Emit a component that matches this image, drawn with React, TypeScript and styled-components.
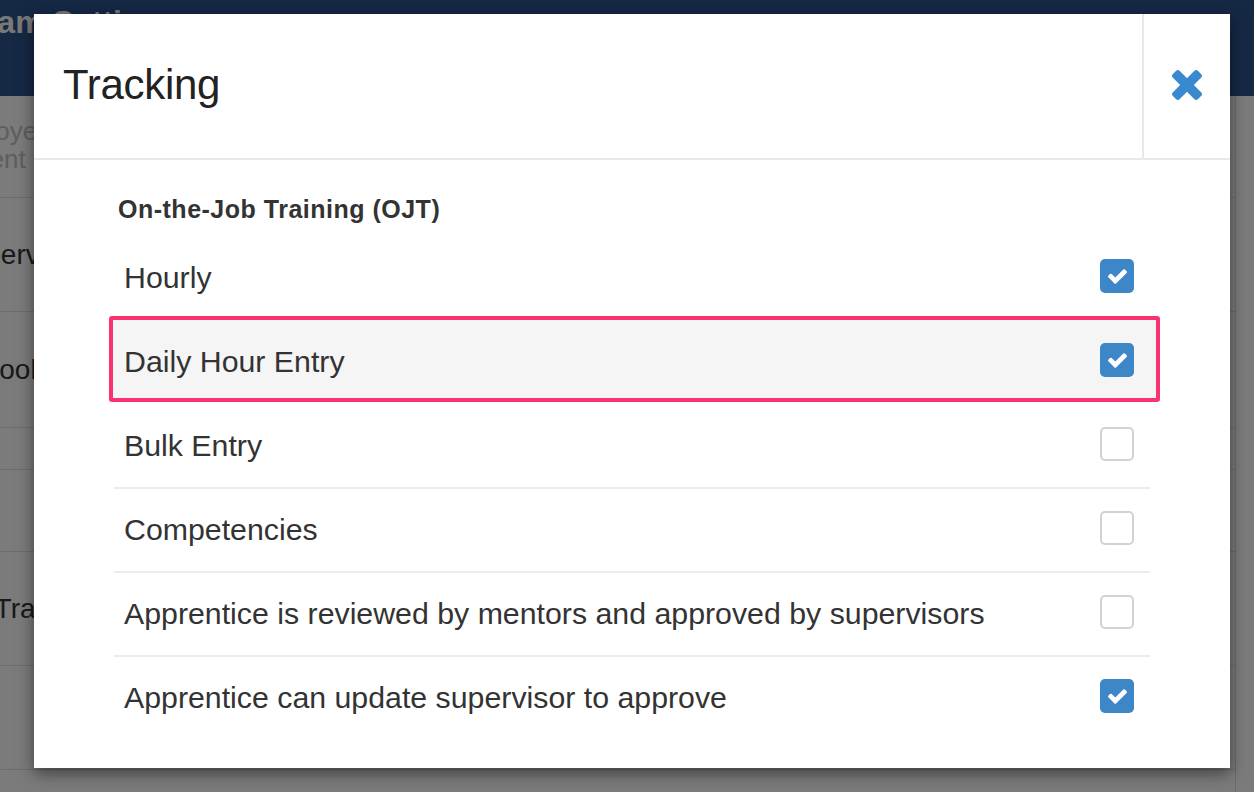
import React from "react";
import styled, { createGlobalStyle } from "styled-components";

const GlobalStyle = createGlobalStyle`
  html, body {
    margin: 0;
    padding: 0;
    width: 1254px;
    height: 792px;
    overflow: hidden;
    font-family: "Liberation Sans", Arial, Helvetica, sans-serif;
  }
  * { box-sizing: border-box; }
`;

const Screen = styled.div`
  position: relative;
  width: 1254px;
  height: 792px;
  overflow: hidden;
  background: #f6f6f6;
`;

/* ---------- page behind the modal ---------- */
const BgPage = styled.div`
  display: flex;
  flex-direction: column;
  width: 100%;
  height: 100%;
`;

const NavBar = styled.div`
  height: 96px;
  flex: none;
  background: #2a5088;
  padding-top: 6px;
  overflow: hidden;
`;

const NavTitle = styled.h1`
  margin: 0 0 0 -88px;
  font-size: 32px;
  line-height: 32px;
  font-weight: 700;
  color: #f2f2f2;
  white-space: nowrap;
`;

const BgTable = styled.div`
  display: flex;
  flex-direction: column;
  margin: 0 18px 0 -49px;
  border-right: 1px solid #d6d6d6;
  flex: 1;
`;

const BgRow = styled.div<{ $h: number }>`
  height: ${(p) => p.$h}px;
  flex: none;
  display: flex;
  align-items: center;
  border-bottom: 1px solid #dadada;
  font-size: 28px;
  color: #333;
  white-space: nowrap;
`;

const BgHead = styled.div`
  margin-left: -15px;
  font-size: 26px;
  line-height: 28px;
  color: #bdbdbd;
  padding-bottom: 4px;
`;

const Backdrop = styled.div`
  position: absolute;
  inset: 0;
  background: rgba(0, 0, 0, 0.5);
`;

/* ---------- modal ---------- */
const ModalLayer = styled.div`
  position: absolute;
  inset: 0;
  padding: 14px 24px 24px 34px;
  display: flex;
  align-items: flex-start;
`;

const Modal = styled.div`
  width: 1196px;
  height: 754px;
  background: #fff;
  box-shadow: 0 5px 15px rgba(0, 0, 0, 0.5);
  display: flex;
  flex-direction: column;
`;

const ModalHeader = styled.div`
  height: 146px;
  flex: none;
  display: flex;
  border-bottom: 2px solid #e9e9e9;
`;

const Title = styled.h2`
  flex: 1;
  margin: 0;
  padding: 0 0 3px 29px;
  display: flex;
  align-items: center;
  font-size: 42px;
  font-weight: 400;
  color: #222;
  letter-spacing: -0.3px;
`;

const CloseButton = styled.button`
  width: 88px;
  flex: none;
  border: none;
  border-left: 2px solid #e8e8e8;
  background: transparent;
  display: flex;
  align-items: center;
  justify-content: center;
  padding: 0 0 2px 0;
  color: #3a89cf;
  cursor: pointer;
`;

const ModalBody = styled.div`
  padding: 31px 80px 0 80px;
  display: flex;
  flex-direction: column;
`;

const SectionHeading = styled.h3`
  margin: 0 0 8px 4px;
  font-size: 25px;
  line-height: 36px;
  font-weight: 700;
  color: #333;
  letter-spacing: 0.5px;
`;

const OptionRow = styled.div<{ $divider?: boolean; $highlight?: boolean }>`
  position: relative;
  height: 84px;
  display: flex;
  align-items: center;
  justify-content: space-between;
  padding: 0 16px 0 10px;
  border-top: 2px solid ${(p) => (p.$divider ? "#ececec" : "transparent")};

  ${(p) =>
    p.$highlight &&
    `
    &::before {
      content: "";
      position: absolute;
      top: -5px;
      bottom: 1px;
      left: -5px;
      right: -10px;
      background: #f5f5f5;
      border: 4px solid #f8336f;
      border-radius: 3px;
    }
  `}
`;

const OptionLabel = styled.span`
  position: relative;
  font-size: 30.3px;
  color: #333;
  white-space: nowrap;
`;

const Checkbox = styled.span<{ $checked?: boolean }>`
  position: relative;
  width: 34px;
  height: 34px;
  margin-bottom: 4px;
  border-radius: 5px;
  display: flex;
  align-items: center;
  justify-content: center;
  background: ${(p) => (p.$checked ? "#3d87c9" : "#fff")};
  border: ${(p) => (p.$checked ? "none" : "2px solid #d2d2d2")};
  color: #fff;
`;

const CheckIcon = () => (
  <svg width="19" height="15" viewBox="121 334 1550 1188" fill="currentColor" aria-hidden="true">
    <path d="M1671 566q0 40-28 68l-724 724-136 136q-28 28-68 28t-68-28l-136-136-362-362q-28-28-28-68t28-68l136-136q28-28 68-28t68 28l294 295 656-657q28-28 68-28t68 28l136 136q28 28 28 68z" />
  </svg>
);

const TimesIcon = () => (
  <svg width="30" height="30" viewBox="110 366 1188 1188" fill="currentColor" aria-hidden="true">
    <path d="M1298 1322q0 40-28 68l-136 136q-28 28-68 28t-68-28l-294-294-294 294q-28 28-68 28t-68-28l-136-136q-28-28-28-68t28-68l294-294-294-294q-28-28-28-68t28-68l136-136q28-28 68-28t68 28l294 294 294-294q28-28 68-28t68 28l136 136q28 28 28 68t-28 68l-294 294 294 294q28 28 28 68z" />
  </svg>
);

const options = [
  { label: "Hourly", checked: true },
  { label: "Daily Hour Entry", checked: true, highlight: true },
  { label: "Bulk Entry", checked: false },
  { label: "Competencies", checked: false, divider: true },
  {
    label: "Apprentice is reviewed by mentors and approved by supervisors",
    checked: false,
    divider: true,
  },
  { label: "Apprentice can update supervisor to approve", checked: true, divider: true },
];

export default function App() {
  return (
    <>
      <GlobalStyle />
      <Screen>
        <BgPage>
          <NavBar>
            <NavTitle>Program Settings</NavTitle>
          </NavBar>
          <BgTable>
            <BgRow $h={102}>
              <BgHead>
                Employee
                <br />
                Student
              </BgHead>
            </BgRow>
            <BgRow $h={114}>Supervisor</BgRow>
            <BgRow $h={116}>School</BgRow>
            <BgRow $h={42} />
            <BgRow $h={82} />
            <BgRow $h={114}>RT Training</BgRow>
            <BgRow $h={104} />
          </BgTable>
        </BgPage>
        <Backdrop />
        <ModalLayer>
          <Modal role="dialog" aria-label="Tracking">
            <ModalHeader>
              <Title>Tracking</Title>
              <CloseButton aria-label="Close">
                <TimesIcon />
              </CloseButton>
            </ModalHeader>
            <ModalBody>
              <SectionHeading>On-the-Job Training (OJT)</SectionHeading>
              {options.map((o) => (
                <OptionRow key={o.label} $divider={o.divider} $highlight={o.highlight}>
                  <OptionLabel>{o.label}</OptionLabel>
                  <Checkbox $checked={o.checked} role="checkbox" aria-checked={o.checked}>
                    {o.checked && <CheckIcon />}
                  </Checkbox>
                </OptionRow>
              ))}
            </ModalBody>
          </Modal>
        </ModalLayer>
      </Screen>
    </>
  );
}
